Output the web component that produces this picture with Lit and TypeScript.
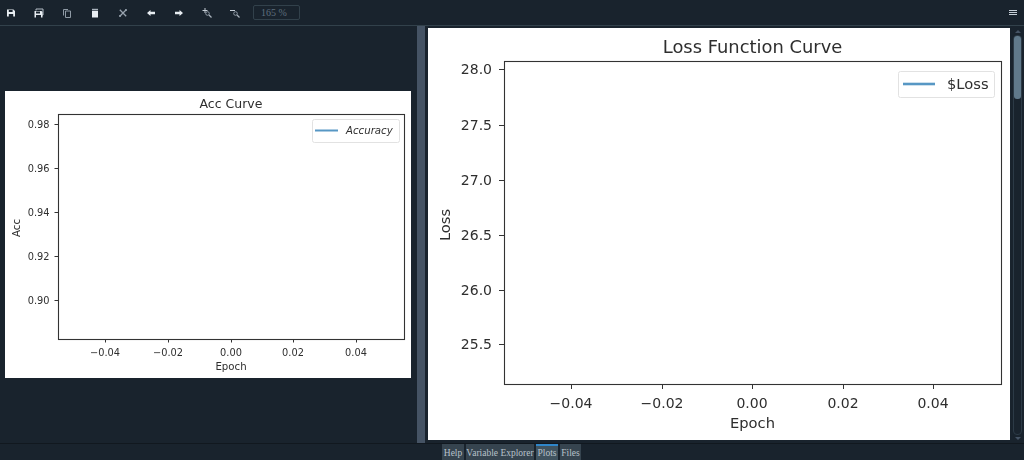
import { LitElement, html, svg, css } from 'lit';
import { customElement, property } from 'lit/decorators.js';

interface ChartConfig {
  width: number;
  height: number;
  title: string;
  ylabel: string;
  legend: string;
  legendItalic?: boolean;
  font: number;
  labelFont: number;
  titleFont: number;
  axes: { left: number; top: number; right: number; bottom: number };
  xTicks: [number, string][];
  yTicks: [number, string][];
  legendBox: { x: number; y: number; w: number; h: number };
  legendLine: { from: number; to: number; width: number };
  legendTextX: number;
  tickLen: number;
  tickGap: number;
  titleY: number;
  tickLabelY: number;
  xlabelY: number;
  ylabelX: number;
  ylabelY: number;
}

const ACC_CHART: ChartConfig = {
  width: 406,
  height: 287,
  title: 'Acc Curve',
  ylabel: 'Acc',
  legend: 'Accuracy',
  legendItalic: true,
  font: 9.8,
  labelFont: 10.2,
  titleFont: 12.5,
  axes: { left: 53, top: 23, right: 399, bottom: 248 },
  xTicks: [
    [100, '\u22120.04'],
    [163, '\u22120.02'],
    [226, '0.00'],
    [288, '0.02'],
    [351, '0.04'],
  ],
  yTicks: [
    [33, '0.98'],
    [77, '0.96'],
    [121, '0.94'],
    [165, '0.92'],
    [209, '0.90'],
  ],
  legendBox: { x: 307, y: 28, w: 87, h: 23 },
  legendLine: { from: 310, to: 333, width: 2 },
  legendTextX: 341,
  tickLen: 3.5,
  tickGap: 5,
  titleY: 17,
  tickLabelY: 265,
  xlabelY: 279,
  ylabelX: 15,
  ylabelY: 137,
};

const LOSS_CHART: ChartConfig = {
  width: 582,
  height: 412,
  title: 'Loss Function Curve',
  ylabel: 'Loss',
  legend: '$Loss',
  font: 14,
  labelFont: 14.7,
  titleFont: 17.9,
  axes: { left: 76, top: 33, right: 573, bottom: 356 },
  xTicks: [
    [143, '\u22120.04'],
    [234, '\u22120.02'],
    [324, '0.00'],
    [415, '0.02'],
    [505, '0.04'],
  ],
  yTicks: [
    [41, '28.0'],
    [97, '27.5'],
    [152, '27.0'],
    [207, '26.5'],
    [262, '26.0'],
    [316, '25.5'],
  ],
  legendBox: { x: 470, y: 43, w: 96, h: 26 },
  legendLine: { from: 475, to: 507, width: 2.6 },
  legendTextX: 519,
  tickLen: 5,
  tickGap: 7,
  titleY: 25,
  tickLabelY: 380,
  xlabelY: 400,
  ylabelX: 22,
  ylabelY: 197,
};

@customElement('plot-chart')
export class PlotChart extends LitElement {
  @property({ type: Object })
  config: ChartConfig = ACC_CHART;

  static override styles = css`
    :host {
      display: block;
    }

    svg {
      display: block;
      background: #fff;
      filter: blur(0.5px);
      font-family: 'DejaVu Sans', sans-serif;
    }

    text {
      fill: #2e2e2e;
    }

    .italic {
      font-style: italic;
    }

    .frame {
      fill: none;
      stroke: #333;
      stroke-width: 1.1;
    }

    .tick {
      stroke: #333;
      stroke-width: 1;
    }

    .legend-box {
      fill: #fff;
      stroke: #e2e2e2;
      stroke-width: 1;
    }

    .legend-line {
      stroke: #5797c4;
    }
  `;

  override render() {
    const c = this.config;
    const a = c.axes;
    const lb = c.legendBox;
    const midX = (a.left + a.right) / 2;
    const legendMid = lb.y + lb.h / 2;
    return html`
      <svg width=${c.width} height=${c.height} viewBox="0 0 ${c.width} ${c.height}">
        <rect class="frame" x=${a.left + 0.5} y=${a.top + 0.5} width=${a.right - a.left} height=${a.bottom - a.top}></rect>
        <text x=${midX} y=${c.titleY} font-size=${c.titleFont} text-anchor="middle">${c.title}</text>
        ${c.xTicks.map(
          ([x, label]) => svg`
            <line class="tick" x1=${x + 0.5} x2=${x + 0.5} y1=${a.bottom} y2=${a.bottom + c.tickLen}></line>
            <text x=${x} y=${c.tickLabelY} font-size=${c.font} text-anchor="middle">${label}</text>
          `,
        )}
        ${c.yTicks.map(
          ([y, label]) => svg`
            <line class="tick" x1=${a.left - c.tickLen} x2=${a.left} y1=${y + 0.5} y2=${y + 0.5}></line>
            <text x=${a.left - c.tickLen - c.tickGap} y=${y + c.font * 0.37} font-size=${c.font} text-anchor="end">${label}</text>
          `,
        )}
        <text x=${midX} y=${c.xlabelY} font-size=${c.labelFont} text-anchor="middle">Epoch</text>
        <text
          transform="translate(${c.ylabelX} ${c.ylabelY}) rotate(-90)"
          font-size=${c.labelFont}
          text-anchor="middle"
        >${c.ylabel}</text>
        <rect class="legend-box" x=${lb.x + 0.5} y=${lb.y + 0.5} width=${lb.w} height=${lb.h} rx="2"></rect>
        <line
          class="legend-line"
          x1=${c.legendLine.from}
          x2=${c.legendLine.to}
          y1=${legendMid}
          y2=${legendMid}
          stroke-width=${c.legendLine.width}
        ></line>
        <text
          class=${c.legendItalic ? 'italic' : ''}
          x=${c.legendTextX}
          y=${legendMid + c.labelFont * 0.37}
          font-size=${c.labelFont}
        >${c.legend}</text>
      </svg>
    `;
  }
}

/* Toolbar glyphs, all on a 10x10 box */
const ICONS = [
  // save
  svg`<path fill="#e8edf2" fill-rule="evenodd" d="M1 1.500h6.500l1.500 1.500v5.500h-8zM2.800 2v2h3.800v-2zM2.800 6v2.500h4.400v-2.500z"/>`,
  // save all
  svg`<path fill="none" stroke="#b4bdc6" d="M2 2.500v-1.500h7v6h-1"/><path fill="#e8edf2" fill-rule="evenodd" d="M0.500 3h7l1 1v5.500h-8zM2 3.500v2h4v-2zM2 7v2.500h5v-2.500z"/>`,
  // copy
  svg`<path fill="none" stroke="#8f9aa5" stroke-width="1" d="M1.500 7.500v-6h4.500M3.500 3h5v6.500h-5z"/>`,
  // delete
  svg`<path fill="#e8edf2" d="M2 2.800h6v6.700h-6z"/><path fill="#aab3bc" d="M2 .8h6v1.400h-6z"/>`,
  // delete all
  svg`<path stroke="#98a3ae" stroke-width="1.300" fill="none" d="M1.800 1.800l6.400 6.400M8.200 1.800l-6.400 6.400"/><circle cx="2" cy="8" r="1" fill="#98a3ae"/><circle cx="8" cy="2" r="1" fill="#98a3ae"/>`,
  // previous
  svg`<path fill="#e8edf2" d="M1 5l3.500-3v1.800h4.500v2.400h-4.500v1.800z"/>`,
  // next
  svg`<path fill="#e8edf2" d="M9 5l-3.500-3v1.800h-4.500v2.400h4.500v1.800z"/>`,
  // zoom in
  svg`<path stroke="#c6ced6" stroke-width="1" fill="none" d="M3 0v5M0.500 2.500h5"/><circle cx="5.500" cy="5.500" r="1.800" fill="none" stroke="#8f9aa5"/><path stroke="#aab3bc" stroke-width="1.300" d="M7 7l2.500 2.500"/>`,
  // zoom out
  svg`<path stroke="#c6ced6" stroke-width="1" fill="none" d="M0 2.500h5"/><circle cx="5.500" cy="5.500" r="1.800" fill="none" stroke="#8f9aa5"/><path stroke="#aab3bc" stroke-width="1.300" d="M7 7l2.500 2.500"/>`,
];

const TABS = [
  { label: 'Help', width: 22, active: false },
  { label: 'Variable Explorer', width: 68, active: false },
  { label: 'Plots', width: 22, active: true },
  { label: 'Files', width: 21, active: false },
];

@customElement('app-root')
export class AppRoot extends LitElement {
  static override styles = css`
    :host {
      display: flex;
      flex-direction: column;
      width: 1024px;
      height: 460px;
      overflow: hidden;
      background: #19232d;
      font-family: 'Liberation Serif', serif;
    }

    /* Toolbar */
    .toolbar {
      display: flex;
      align-items: center;
      flex: none;
      height: 25px;
      padding: 0 7px 0 6px;
      gap: 18px;
      border-bottom: 1px solid #32414b;
    }

    .tool {
      display: block;
      width: 10px;
      height: 10px;
      flex: none;
      filter: blur(0.35px);
    }

    .zoom-input {
      box-sizing: border-box;
      width: 47px;
      height: 15px;
      margin-left: -5px;
      padding-left: 7px;
      border: 1px solid #32414b;
      border-radius: 2px;
      color: #5f6f7d;
      font-size: 10px;
      line-height: 13px;
    }

    .menu {
      display: flex;
      flex-direction: column;
      gap: 1px;
      margin-left: auto;
    }

    .menu span {
      display: block;
      width: 8px;
      height: 1px;
      background: #c6ced6;
    }

    /* Panes */
    .main {
      display: flex;
      flex: 1;
      min-height: 0;
    }

    .left {
      display: flex;
      align-items: center;
      flex: none;
      width: 412px;
      padding-left: 5px;
    }

    .splitter {
      flex: none;
      width: 8px;
      background: #455364;
    }

    .right {
      display: flex;
      flex: 1;
      min-width: 0;
      padding: 2px 0 3px 3px;
    }

    .right plot-chart {
      flex: none;
    }

    /* Scrollbar */
    .scroll {
      display: flex;
      flex-direction: column;
      align-items: center;
      flex: none;
      width: 14px;
      box-sizing: border-box;
      padding: 2px 2px 0 3px;
    }

    .arrow {
      flex: none;
      width: 0;
      height: 0;
      border-left: 3px solid transparent;
      border-right: 3px solid transparent;
    }

    .arrow.up {
      border-bottom: 3px solid #455364;
    }

    .arrow.down {
      border-top: 3px solid #455364;
    }

    .track {
      flex: 1;
      width: 9px;
      box-sizing: border-box;
      margin: 2px 0;
      border: 1px solid #2c3a46;
      border-radius: 4px;
    }

    .thumb {
      width: 7px;
      height: 63px;
      border-radius: 3px;
      background: #60798b;
    }

    /* Bottom tabs */
    .tabs {
      display: flex;
      flex: none;
      height: 16px;
      padding-left: 442px;
      gap: 2px;
      border-top: 1px solid #11181f;
    }

    .tab {
      box-sizing: border-box;
      height: 16px;
      background: #36444f;
      color: #b8c2cb;
      font-size: 9.5px;
      line-height: 14px;
      text-align: center;
      white-space: nowrap;
      border-top: 2px solid transparent;
    }

    .tab.active {
      background: #40535f;
      border-top-color: #2f86c9;
    }
  `;

  override render() {
    return html`
      <div class="toolbar">
        ${ICONS.map((icon) => html`<svg class="tool" viewBox="0 0 10 10">${icon}</svg>`)}
        <div class="zoom-input">165 %</div>
        <div class="menu"><span></span><span></span><span></span></div>
      </div>
      <div class="main">
        <div class="left"><plot-chart .config=${ACC_CHART}></plot-chart></div>
        <div class="splitter"></div>
        <div class="right">
          <plot-chart .config=${LOSS_CHART}></plot-chart>
          <div class="scroll">
            <div class="arrow up"></div>
            <div class="track"><div class="thumb"></div></div>
            <div class="arrow down"></div>
          </div>
        </div>
      </div>
      <div class="tabs">
        ${TABS.map(
          (t) => html`<div class="tab ${t.active ? 'active' : ''}" style="width:${t.width}px">${t.label}</div>`,
        )}
      </div>
    `;
  }
}

declare global {
  interface HTMLElementTagNameMap {
    'app-root': AppRoot;
    'plot-chart': PlotChart;
  }
}
